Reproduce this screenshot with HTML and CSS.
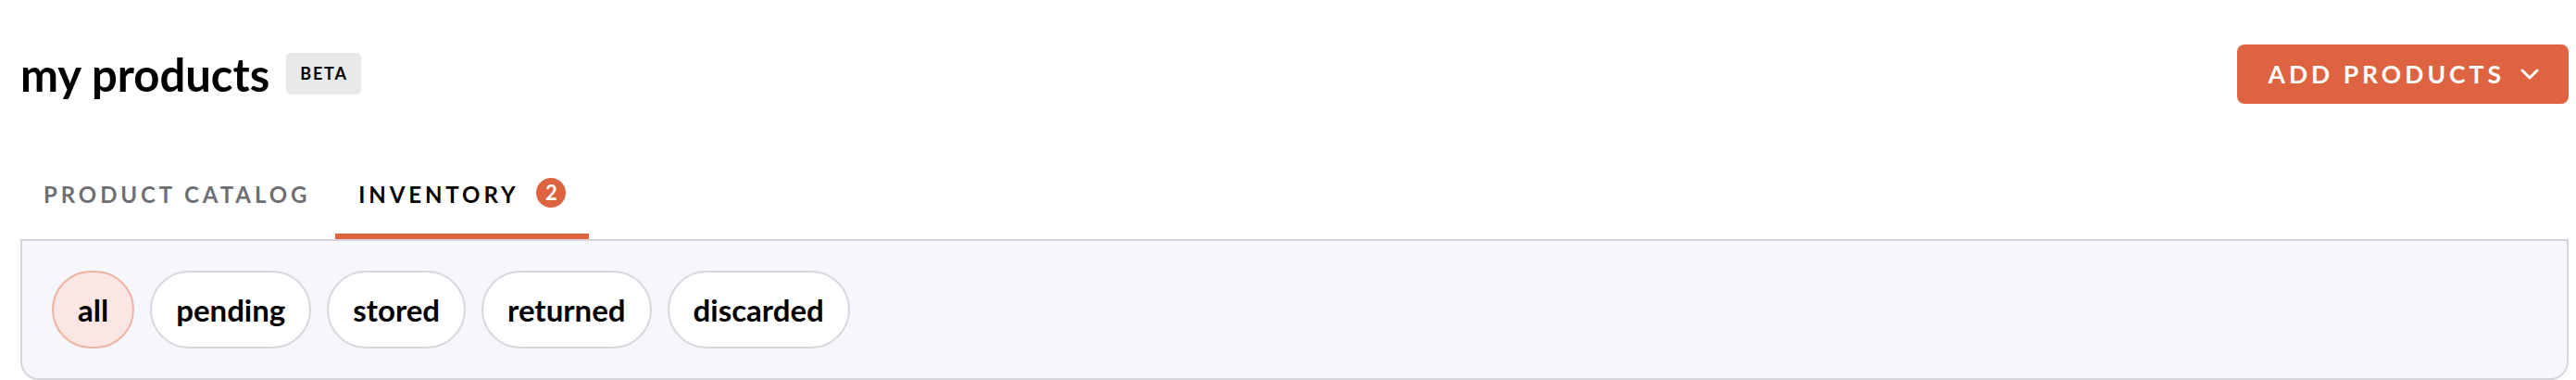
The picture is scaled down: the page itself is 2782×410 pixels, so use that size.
FILE: index.html
```html
<!DOCTYPE html>
<html>

<head>
    <title>my products</title>
    <link rel="stylesheet" href="styles.css">
</head>

<body>
    <div class="page">
        <div class="page-header">
            <div class="title-wrap">
                <h1>my products</h1>
                <span class="beta">BETA</span>
            </div>
            <button class="add-btn">
                ADD PRODUCTS
                <svg width="20" height="12" viewBox="0 0 20 12">
                    <polyline points="2,2 10,10 18,2" fill="none" stroke="#fff" stroke-width="3" stroke-linecap="round" stroke-linejoin="round" />
                </svg>
            </button>
        </div>

        <div class="tabs">
            <a class="tab">PRODUCT CATALOG</a>
            <a class="tab active">INVENTORY <span class="count">2</span></a>
        </div>

        <div class="filter-panel">
            <button class="chip selected">all</button>
            <button class="chip">pending</button>
            <button class="chip">stored</button>
            <button class="chip">returned</button>
            <button class="chip">discarded</button>
        </div>
    </div>
</body>

</html>
```

FILE: styles.css
```css
body {
    font-family: Lato, "Open Sans", sans-serif;
    margin: 0;
    background: #fff;
    color: #000;
}

.page {
    padding: 48px 8px 0 22px;
}

.page-header {
    display: flex;
    justify-content: space-between;
    align-items: center;
    height: 64px;
}

.title-wrap {
    display: flex;
    align-items: center;
    gap: 18px;
}

h1 {
    margin: 0;
    font-size: 49px;
    font-weight: 700;
    line-height: 56px;
}

.beta {
    background: #e8e9eb;
    border-radius: 5px;
    font-size: 18px;
    font-weight: 700;
    letter-spacing: 1.8px;
    line-height: 45px;
    padding: 0 14px 0 15px;
    margin-top: -2px;
}

.add-btn {
    display: flex;
    align-items: center;
    gap: 17px;
    height: 64px;
    padding: 0 32px 0 34px;
    background: #de6340;
    color: #fff;
    border: none;
    border-radius: 8px;
    font-family: inherit;
    font-size: 26.5px;
    font-weight: 700;
    letter-spacing: 4px;
    cursor: pointer;
}

.tabs {
    display: flex;
    gap: 2px;
    margin-top: 55px;
}

.tab {
    display: flex;
    align-items: center;
    padding: 28px 25px;
    border-bottom: 6px solid transparent;
    font-size: 24px;
    font-weight: 700;
    line-height: 29px;
    letter-spacing: 3.9px;
    color: #6e6f73;
}

.tab.active {
    color: #000;
    border-bottom-color: #de6340;
}

.count {
    display: inline-flex;
    align-items: center;
    justify-content: center;
    width: 32px;
    height: 32px;
    margin-left: 19px;
    margin-top: -4px;
    border-radius: 50%;
    background: #de6340;
    color: #fff;
    font-size: 22px;
    letter-spacing: 0;
}

.filter-panel {
    display: flex;
    gap: 17px;
    padding: 32px;
    background: #f6f7fc;
    border: 2px solid #d5d6dc;
    border-radius: 0 0 20px 20px;
}

.chip {
    padding: 20px 26px;
    line-height: 40px;
    background: #fff;
    border: 2px solid #d7d8dd;
    border-radius: 999px;
    font-family: inherit;
    font-size: 33px;
    font-weight: 700;
    color: #000;
    cursor: pointer;
}

.chip.selected {
    background: #fbe6e3;
    border-color: #efb3a0;
}
```
